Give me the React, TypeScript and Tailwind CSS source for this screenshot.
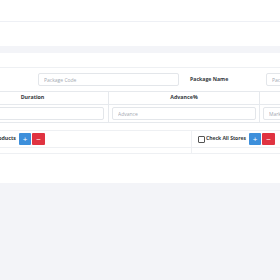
export default function App() {
  return (
    <div className="min-h-[280px] bg-[#f3f4f8] font-['Open_Sans',sans-serif] text-[#343a40] overflow-hidden">
      {/* Top bars */}
      <div className="h-[22px] bg-white border-b border-[#eef0f5]" />
      <div className="h-[24px] bg-white" />
      <div className="h-[7px]" />

      {/* Card */}
      <div className="bg-white h-[130px] overflow-hidden">
        <div className="h-[15px] border-b border-[#eef0f3]" />

        {/* Package row */}
        <div className="flex items-center py-[5px] ml-[-80px] w-[540px]">
          <div className="w-[118px] text-[5.3px] font-bold">Package Code</div>
          <input
            className="block w-[141px] h-[13px] border border-[#e3e6ea] rounded-[2px] px-[5px] text-[5px] placeholder:text-[#a4a9b2] outline-none"
            placeholder="Package Code"
          />
          <div className="w-[87px] pl-[11px] text-[5.2px] font-bold">Package Name</div>
          <input
            className="block w-[141px] h-[13px] border border-[#e3e6ea] rounded-[2px] px-[5px] text-[5px] placeholder:text-[#a4a9b2] outline-none"
            placeholder="Package Name"
          />
        </div>

        {/* Table */}
        <div className="ml-[-43px] w-[460px] border-t border-[#e6e9ed]">
          <div className="grid grid-cols-[152px_151px_151px] border-b border-[#e6e9ed] h-[13px]">
            <div className="flex items-center justify-center text-[5.3px] font-bold border-r border-[#e6e9ed]">Duration</div>
            <div className="flex items-center justify-center text-[5.3px] font-bold border-r border-[#e6e9ed]">Advance%</div>
            <div className="flex items-center justify-center text-[5.3px] font-bold">Markup%</div>
          </div>
          <div className="grid grid-cols-[152px_151px_151px] border-b border-[#e6e9ed]">
            <div className="py-[2px] pr-[4px] border-r border-[#e6e9ed]">
              <input className="block w-full h-[13px] border border-[#e3e6ea] rounded-[2px] px-[5px] text-[5px] placeholder:text-[#a4a9b2] outline-none" placeholder="Duration" />
            </div>
            <div className="py-[2px] px-[3px] border-r border-[#e6e9ed]">
              <input className="block w-full h-[13px] border border-[#e3e6ea] rounded-[2px] px-[5px] text-[5px] placeholder:text-[#a4a9b2] outline-none" placeholder="Advance" />
            </div>
            <div className="py-[2px] px-[3px]">
              <input className="block w-full h-[13px] border border-[#e3e6ea] rounded-[2px] px-[5px] text-[5px] placeholder:text-[#a4a9b2] outline-none" placeholder="Markup" />
            </div>
          </div>
        </div>

        {/* Products / stores */}
        <div className="mt-[7px] ml-[-80px] w-[500px] grid grid-cols-[272px_228px] border-t border-b border-[#eef0f3]">
          <div className="flex items-center justify-end gap-[3px] h-[17px] pr-[146px] border-r border-b border-[#eef0f3]">
            <span className="text-[5.3px] font-bold">Select Products</span>
            <button className="w-[12px] h-[12px] bg-[#3d8fdb] text-white text-[8px] leading-none rounded-[1px] flex items-center justify-center">+</button>
            <button className="w-[13px] h-[12px] bg-[#e03341] text-white text-[8px] leading-none rounded-[1px] flex items-center justify-center -ml-[2px]">−</button>
          </div>
          <div className="flex items-center h-[17px] pl-[6px] border-b border-[#eef0f3]">
            <span className="w-[7px] h-[7px] border border-[#555] rounded-[1px] bg-white" />
            <span className="ml-[1px] text-[5px] font-bold">Check All Stores</span>
            <button className="ml-[3px] w-[12px] h-[12px] bg-[#3d8fdb] text-white text-[8px] leading-none rounded-[1px] flex items-center justify-center">+</button>
            <button className="ml-[1px] w-[13px] h-[12px] bg-[#e03341] text-white text-[8px] leading-none rounded-[1px] flex items-center justify-center">−</button>
          </div>
          <div className="h-[5px] border-r border-[#eef0f3]" />
          <div className="h-[5px]" />
        </div>
      </div>
    </div>
  );
}
